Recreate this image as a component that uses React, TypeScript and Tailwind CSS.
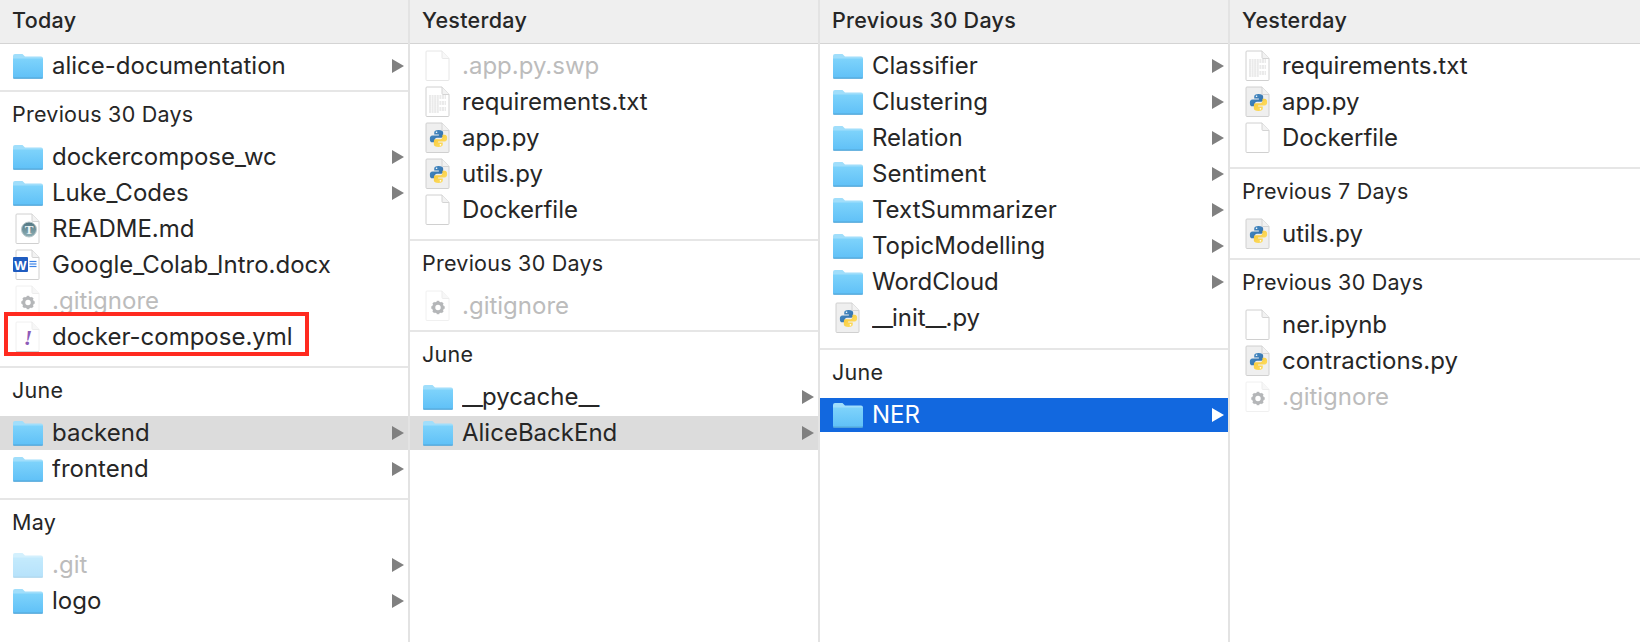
import { useId } from "react";

type Kind = "folder" | "page" | "txt" | "py" | "readme" | "word" | "gear" | "yml";

interface Item {
  name: string;
  kind: Kind;
  dim?: boolean;
  open?: "gray" | "blue";
  boxed?: boolean;
}

interface Group {
  label?: string;
  items: Item[];
}

interface Column {
  title: string;
  groups: Group[];
}

const COLUMNS: Column[] = [
  {
    title: "Today",
    groups: [
      { items: [{ name: "alice-documentation", kind: "folder" }] },
      {
        label: "Previous 30 Days",
        items: [
          { name: "dockercompose_wc", kind: "folder" },
          { name: "Luke_Codes", kind: "folder" },
          { name: "README.md", kind: "readme" },
          { name: "Google_Colab_Intro.docx", kind: "word" },
          { name: ".gitignore", kind: "gear", dim: true },
          { name: "docker-compose.yml", kind: "yml", boxed: true },
        ],
      },
      {
        label: "June",
        items: [
          { name: "backend", kind: "folder", open: "gray" },
          { name: "frontend", kind: "folder" },
        ],
      },
      {
        label: "May",
        items: [
          { name: ".git", kind: "folder", dim: true },
          { name: "logo", kind: "folder" },
        ],
      },
    ],
  },
  {
    title: "Yesterday",
    groups: [
      {
        items: [
          { name: ".app.py.swp", kind: "page", dim: true },
          { name: "requirements.txt", kind: "txt" },
          { name: "app.py", kind: "py" },
          { name: "utils.py", kind: "py" },
          { name: "Dockerfile", kind: "page" },
        ],
      },
      { label: "Previous 30 Days", items: [{ name: ".gitignore", kind: "gear", dim: true }] },
      {
        label: "June",
        items: [
          { name: "__pycache__", kind: "folder" },
          { name: "AliceBackEnd", kind: "folder", open: "gray" },
        ],
      },
    ],
  },
  {
    title: "Previous 30 Days",
    groups: [
      {
        items: [
          { name: "Classifier", kind: "folder" },
          { name: "Clustering", kind: "folder" },
          { name: "Relation", kind: "folder" },
          { name: "Sentiment", kind: "folder" },
          { name: "TextSummarizer", kind: "folder" },
          { name: "TopicModelling", kind: "folder" },
          { name: "WordCloud", kind: "folder" },
          { name: "__init__.py", kind: "py" },
        ],
      },
      { label: "June", items: [{ name: "NER", kind: "folder", open: "blue" }] },
    ],
  },
  {
    title: "Yesterday",
    groups: [
      {
        items: [
          { name: "requirements.txt", kind: "txt" },
          { name: "app.py", kind: "py" },
          { name: "Dockerfile", kind: "page" },
        ],
      },
      { label: "Previous 7 Days", items: [{ name: "utils.py", kind: "py" }] },
      {
        label: "Previous 30 Days",
        items: [
          { name: "ner.ipynb", kind: "page" },
          { name: "contractions.py", kind: "py" },
          { name: ".gitignore", kind: "gear", dim: true },
        ],
      },
    ],
  },
];

const PAGE = "M4 2h15l7 7.5V30.5a1 1 0 0 1-1 1H4a1 1 0 0 1-1-1V3a1 1 0 0 1 1-1z";
const FOLD = "M19 2v6.5a1 1 0 0 0 1 1h6";
const TEXT_LINES = [11, 13, 15, 17, 19, 21, 23, 25, 27];

function FolderIcon({ dim }: { dim?: boolean }) {
  const id = useId();
  return (
    <svg width="30" height="34" viewBox="0 0 30 34" opacity={dim ? 0.45 : 1}>
      <defs>
        <linearGradient id={id} x1="0" y1="0" x2="0" y2="1">
          <stop offset="0" stopColor="#7ed3fb" />
          <stop offset="1" stopColor="#5fc0f7" />
        </linearGradient>
      </defs>
      <path d="M0 7a2 2 0 0 1 2-2h7.5l2.5 2.500H28a2 2 0 0 1 2 2V14H0z" fill="#a0defb" />
      <path d="M0 9.500h30V28a1.500 1.500 0 0 1-1.500 1.500h-27A1.500 1.500 0 0 1 0 28z" fill={`url(#${id})`} />
      <path d="M0 28.500h30V28.800a1 1 0 0 1-1 1H1a1 1 0 0 1-1-1z" fill="#55a7d8" />
    </svg>
  );
}

function PageBase({ tint, faint }: { tint?: string; faint?: boolean }) {
  return (
    <>
      <path d={PAGE} fill={tint ?? "#ffffff"} stroke={faint ? "#f0f0f0" : "#d0d0d0"} strokeWidth="1" />
      <path d={FOLD} fill={faint ? "#f7f7f7" : "#f2f2f2"} stroke={faint ? "#ededed" : "#d4d4d4"} strokeWidth="1" />
    </>
  );
}

function PythonMark() {
  const id = useId();
  const snake =
    "M12 .6C7.800.6 6.300 2 6.300 4V6.800H12.500V7.900H3.800C1.700 7.900.3 9.700.3 12.200c0 2.800 1.300 4.900 3.500 4.900H6.800V14.100c0-2 1.400-3.200 3.200-3.200h5.600c1.800 0 2.600-1.200 2.600-2.900V4C18.200 2 16.200.6 12 .6z";
  return (
    <svg x="6.500" y="8.500" width="18" height="18" viewBox="0 0 24 24">
      <defs>
        <linearGradient id={`${id}b`} x1="0" y1="0" x2="1" y2="1">
          <stop offset="0" stopColor="#4a90c8" />
          <stop offset="1" stopColor="#2d69a4" />
        </linearGradient>
        <linearGradient id={`${id}y`} x1="0" y1="0" x2="1" y2="1">
          <stop offset="0" stopColor="#ffe36e" />
          <stop offset="1" stopColor="#f6c431" />
        </linearGradient>
      </defs>
      <path d={snake} fill={`url(#${id}b)`} />
      <path d={snake} fill={`url(#${id}y)`} transform="rotate(180 12 12)" />
      <circle cx="9.400" cy="3.600" r="1.100" fill="#ffffff" />
      <circle cx="14.600" cy="20.400" r="1.100" fill="#ffffff" />
    </svg>
  );
}

function Gear() {
  return (
    <g fill="none" stroke="#b4b6b8">
      <circle cx="15" cy="18.500" r="4.300" strokeWidth="3.200" />
      {[0, 45, 90, 135, 180, 225, 270, 315].map((a) => (
        <line key={a} x1="15" y1="11.800" x2="15" y2="14" strokeWidth="2.600" transform={`rotate(${a} 15 18.500)`} />
      ))}
    </g>
  );
}

function DocIcon({ kind, dim }: { kind: Kind; dim?: boolean }) {
  const id = useId();
  return (
    <svg width="30" height="34" viewBox="0 0 30 34" opacity={dim && kind === "page" ? 0.5 : 1}>
      {kind === "page" && <PageBase />}
      {kind === "txt" && (
        <>
          <PageBase />
          {TEXT_LINES.map((y, i) => (
            <line key={y} x1="6" y1={y} x2={i % 3 === 2 ? 16 : 23} y2={y} stroke="#c4c4c4" strokeWidth="0.700" strokeDasharray="2 0.600" />
          ))}
        </>
      )}
      {kind === "py" && (
        <>
          <PageBase tint="#efefef" />
          <PythonMark />
        </>
      )}
      {kind === "readme" && (
        <>
          <PageBase />
          <defs>
            <linearGradient id={id} x1="0" y1="0" x2="0" y2="1">
              <stop offset="0" stopColor="#4f7480" />
              <stop offset="1" stopColor="#8fb0b6" />
            </linearGradient>
          </defs>
          <circle cx="16" cy="17.500" r="7.500" fill={`url(#${id})`} stroke="#b9c6c9" strokeWidth="1" />
          <text x="16" y="22" textAnchor="middle" fontFamily="'Liberation Serif', serif" fontWeight="700" fontSize="13" fill="#eef3f4">
            T
          </text>
        </>
      )}
      {kind === "word" && (
        <>
          <PageBase />
          <rect x="0" y="9" width="15" height="15" rx="1" fill="#1f5cc0" />
          <text x="7.500" y="21.500" textAnchor="middle" fontFamily="'Liberation Sans', sans-serif" fontWeight="700" fontSize="13" fill="#ffffff">
            W
          </text>
          {[13.500, 16, 18.500].map((y) => (
            <line key={y} x1="16.500" y1={y} x2="23.500" y2={y} stroke="#3b82e6" strokeWidth="1.200" />
          ))}
        </>
      )}
      {kind === "gear" && (
        <>
          <PageBase faint />
          <Gear />
        </>
      )}
      {kind === "yml" && (
        <>
          <PageBase faint />
          <line x1="3" y1="31.500" x2="26" y2="31.500" stroke="#d4d4d4" strokeWidth="1" />
          <text x="15" y="25" textAnchor="middle" fontFamily="'Liberation Serif', serif" fontStyle="italic" fontWeight="700" fontSize="22" fill="#8e5bb8">
            !
          </text>
        </>
      )}
    </svg>
  );
}

function FileName({ name }: { name: string }) {
  const spacing = name.startsWith("__") ? "tracking-[-1px]" : "tracking-[-2px]";
  return (
    <>
      {name.split(/(_)/).map((part, i) =>
        part === "_" ? (
          <span key={i} className={spacing}>
            _
          </span>
        ) : (
          part
        ),
      )}
    </>
  );
}

function Row({ item }: { item: Item }) {
  const isBlue = item.open === "blue";
  return (
    <li
      className={`relative flex h-[34px] items-center pl-[13px] pr-1 ${
        isBlue ? "bg-[#1268df] text-white" : item.open === "gray" ? "bg-[#dcdcdc]" : ""
      } ${item.dim ? "text-[#bcbcbc]" : ""}`}
    >
      <span className="w-[30px] shrink-0">
        {item.kind === "folder" ? <FolderIcon dim={item.dim} /> : <DocIcon kind={item.kind} dim={item.dim} />}
      </span>
      <span className="ml-[9px] flex-1 truncate">
        <FileName name={item.name} />
      </span>
      {item.kind === "folder" && (
        <svg width="12" height="14" viewBox="0 0 12 14" className="shrink-0">
          <path d="M0 0l12 7-12 7z" fill={isBlue ? "#ffffff" : "#808080"} />
        </svg>
      )}
      {item.boxed && (
        <span className="absolute -top-[8px] -bottom-[2px] left-1 w-[305px] border-4 border-[#ff2a1f]" />
      )}
    </li>
  );
}

function groupPadding(group: Group) {
  if (group.items.length === 1) return "pb-[7px]";
  if (group.items.length > 6) return "pb-[13px]";
  return "pb-[12px]";
}

function ColumnView({ column, last }: { column: Column; last: boolean }) {
  return (
    <section className={`h-full ${last ? "flex-1" : "w-[410px] border-r-2 border-[#e3e3e3]"}`}>
      <header className="flex h-[44px] items-center border-b-[1.500px] border-[#d4d4d4] bg-[#efefef] pl-[12px] pb-[2px] text-[21.500px] font-medium tracking-[0.3px]">
        {column.title}
      </header>
      {column.groups.map((group, i) => (
        <div
          key={i}
          className={`${i < column.groups.length - 1 ? "border-b-2 border-[#e6e6e6]" : ""} ${groupPadding(group)} ${
            group.label ? "" : "pt-[5px]"
          }`}
        >
          {group.label && (
            <div className="mb-[11px] flex h-[30px] box-content items-center pl-[12px] pt-[7px] text-[21.500px] tracking-[0.25px]">
              {group.label}
            </div>
          )}
          <ul className="flex flex-col gap-[2px]">
            {group.items.map((item) => (
              <Row key={item.name} item={item} />
            ))}
          </ul>
        </div>
      ))}
    </section>
  );
}

export default function App() {
  return (
    <div className="flex h-[642px] w-[1640px] overflow-hidden bg-white font-['Inter','Liberation_Sans',sans-serif] text-[24px] text-[#262626]">
      {COLUMNS.map((column, i) => (
        <ColumnView key={i} column={column} last={i === COLUMNS.length - 1} />
      ))}
    </div>
  );
}
